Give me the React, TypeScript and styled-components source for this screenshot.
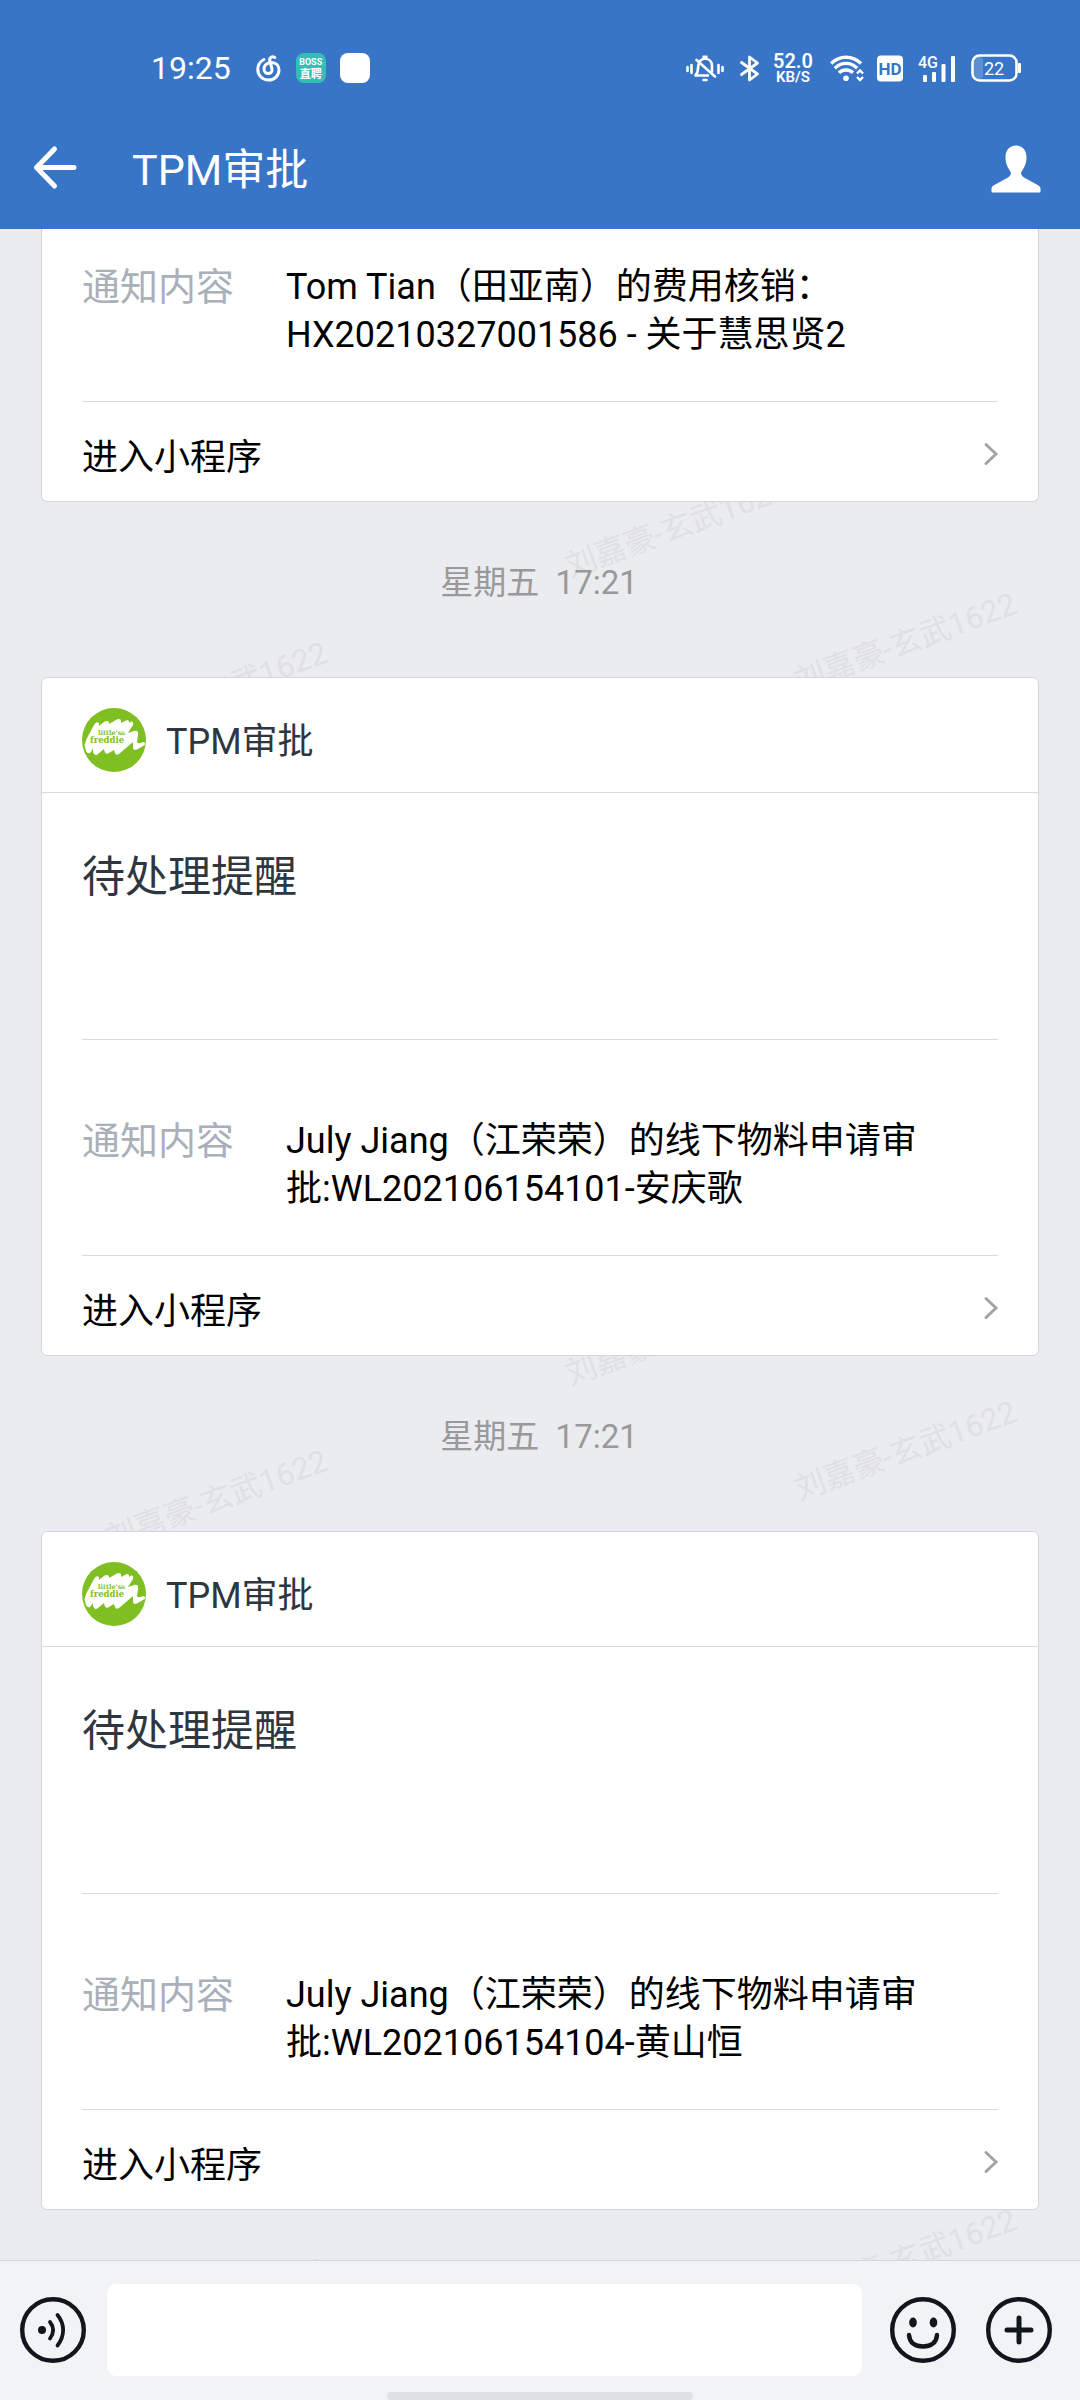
import React from 'react';
import styled, { createGlobalStyle } from 'styled-components';

const latin = `Roboto, "Noto Sans CJK SC", sans-serif`;
const cjk = `"Noto Sans CJK SC", sans-serif`;

const GlobalStyle = createGlobalStyle`
  * { box-sizing: border-box; }
  body { margin: 0; background: #ebecf0; font-family: ${latin}; color: #000; }
  button { border: 0; padding: 0; background: none; color: inherit; font: inherit; cursor: pointer; }
  svg { display: block; flex: none; overflow: visible; }
`;

const Page = styled.div`
  min-height: 100vh;
  display: flex;
  flex-direction: column;
`;

const Header = styled.header`
  background: #3875c6;
  color: #fff;
`;

const StatusBar = styled.div`
  height: 108px;
  padding: 28px 59px 0 151px;
  display: flex;
  align-items: center;
  justify-content: space-between;
`;

const StatusGroup = styled.div`
  display: flex;
  align-items: center;
  gap: 15px;
`;

const Clock = styled.time`
  font-size: 32px;
  line-height: 40px;
  margin-right: 10px;
`;

const BossBadge = styled.div`
  width: 30px;
  height: 30px;
  border-radius: 8px;
  background: #34bfb6;
  display: flex;
  flex-direction: column;
  align-items: center;
  justify-content: center;
  font-size: 9px;
  line-height: 12px;
  font-weight: 700;
`;

const BossName = styled.span`
  font-family: ${cjk};
  font-size: 11px;
  line-height: 16px;
  margin-top: -3px;
`;

const BlankBadge = styled.div`
  width: 30px;
  height: 30px;
  border-radius: 8px;
  margin-left: -1px;
  background: #fff;
`;

const Speed = styled.div`
  width: 40px;
  display: flex;
  flex-direction: column;
  align-items: center;
  font-weight: 600;
  font-size: 20px;
  line-height: 24px;
`;

const SpeedUnit = styled.span`
  font-size: 15px;
  line-height: 20px;
  margin-top: -6px;
`;

const TitleBar = styled.div`
  height: 121px;
  padding: 0 39px 0 32px;
  display: flex;
  align-items: center;
`;

const Title = styled.h1`
  flex: 1;
  margin: 0 0 0 54px;
  padding-top: 3px;
  font-size: 43px;
  line-height: 60px;
  font-weight: 400;
`;

const Chat = styled.main`
  position: relative;
  flex: 1;
  padding: 0 41px;
  overflow: hidden;
`;

const WatermarkLayer = styled.div`
  position: absolute;
  inset: 0;
  overflow: hidden;
  pointer-events: none;
`;

const WatermarkTile = styled.div`
  position: relative;
  height: 808px;
`;

const Watermark = styled.span<{ $x: number; $y: number }>`
  position: absolute;
  left: ${(p) => p.$x}px;
  top: ${(p) => p.$y}px;
  font-size: 31px;
  line-height: 40px;
  white-space: nowrap;
  color: #dfe0e3;
  transform: rotate(-20deg);
  transform-origin: 0 50%;
`;

const Messages = styled.div`
  position: relative;
`;

const Timestamp = styled.time`
  display: block;
  padding: 53px 2px 66px 0;
  text-align: center;
  font-size: 33px;
  line-height: 56px;
  white-space: pre;
  color: #999;
`;

const Card = styled.article<{ $continued?: boolean }>`
  background: #fff;
  border: 1px solid #d5d6d8;
  border-radius: ${(p) => (p.$continued ? '0 0 6px 6px' : '6px')};
  border-top-width: ${(p) => (p.$continued ? 0 : 1)}px;
`;

const CardHeader = styled.header`
  display: flex;
  align-items: center;
  gap: 20px;
  padding: 30px 40px 20px;
  border-bottom: 1px solid #d8d9db;
  color: #2e3640;
`;

const SenderName = styled.span`
  padding-top: 4px;
  font-size: 36px;
  line-height: 48px;
`;

const CardBody = styled.div`
  padding: 0 40px;
`;

const CardTitle = styled.h2`
  margin: 0;
  padding: 50px 0 136px;
  border-bottom: 1px solid #d8d9db;
  font-family: ${cjk};
  font-size: 43px;
  line-height: 60px;
  font-weight: 400;
  color: #2e3640;
`;

const Fields = styled.dl<{ $continued?: boolean }>`
  margin: 0;
  padding: ${(p) => (p.$continued ? 34 : 77)}px 48px 42px 0;
  display: grid;
  grid-template-columns: 204px 1fr;
  align-items: start;
  border-bottom: 1px solid #d8d9db;
  line-height: 48px;
`;

const FieldName = styled.dt`
  font-size: 38px;
  color: #a9b0ba;
`;

const FieldValue = styled.dd`
  margin: 0;
  font-size: 36px;
`;

const CardLink = styled.a`
  display: flex;
  align-items: center;
  justify-content: space-between;
  padding: 28px 0 23px;
  font-family: ${cjk};
  font-size: 36px;
  line-height: 48px;
  color: #000;
  text-decoration: none;
`;

const Composer = styled.form`
  display: flex;
  align-items: center;
  padding: 23px 28px 16px 20px;
  background: #f2f3f5;
  border-top: 1px solid #d5d6d8;
`;

const MessageInput = styled.input`
  flex: 1;
  min-width: 0;
  height: 92px;
  margin: 0 28px 0 21px;
  padding: 0 24px;
  border: 0;
  border-radius: 9px;
  background: #fff;
  font: 400 36px/48px ${latin};
  outline: none;
`;

const PlusButton = styled.button`
  margin-left: 30px;
`;

const HomeArea = styled.div`
  display: flex;
  justify-content: center;
  background: #f2f3f5;
`;

const HomeIndicator = styled.div`
  width: 306px;
  height: 8px;
  border-radius: 4px;
  background: #dfe0e2;
`;

const MusicIcon = () => (
  <svg width="25" height="27" viewBox="0 0 25 27" fill="none" stroke="#fff" strokeWidth="3" strokeLinecap="round">
    <path d="M8 4.500C4 6.500 1.800 10 1.800 14.500C1.800 20.500 6.500 25 12.500 25S23 20.500 23 15C23 10.500 20 7.500 15.500 7.500C11 7.500 8 10.500 8 13.800C8 16.500 9.800 18.500 12.200 18.500C14.800 18.500 16.500 16.500 16 14L13.800 5.500C13.200 2.500 16 .8 18.800 2.500" />
  </svg>
);

const MutedBellIcon = () => (
  <svg width="38" height="27" viewBox="-1 0 38 27" fill="none" stroke="#fff" strokeWidth="2.600" strokeLinecap="round" strokeLinejoin="round">
    <path d="M1.500 12V16M5.500 10V18M32.500 10V18M36.500 12V16" />
    <path d="M14.500 5.500C16 4.300 17.500 3.800 19 3.800C23.500 3.800 26 7 26 11V16.500M12.500 9.500L11.500 17L9.500 20.500H22M10.500 5L29 21.500" />
    <path d="M17.500 1.800H20.500M17.500 25H20.500" />
  </svg>
);

const BluetoothIcon = () => (
  <svg width="20" height="27" viewBox="-2 0 20 27" fill="none" stroke="#fff" strokeWidth="2.800" strokeLinejoin="round" strokeLinecap="round">
    <path d="M1.500 7.500L17.500 19L9.500 25V2L17.500 8L1.500 19.500" />
  </svg>
);

const WifiIcon = () => (
  <svg width="34" height="27" viewBox="-2 0 34 27" fill="none" stroke="#fff" strokeWidth="3.400">
    <path d="M1.200 8.500C9.500 .2 22.500 .2 31 8.500M4.800 13.200C11.500 6.800 20.500 6.800 27.200 13.200M9 17.800C13 14 19 14 23 17.800" />
    <circle cx="16" cy="23.200" r="2.800" fill="#fff" stroke="none" />
    <path d="M27 18.500L30 15.500L33 18.500M27 22L30 25L33 22" strokeWidth="2.400" />
  </svg>
);

const HdIcon = () => (
  <svg width="26" height="27" viewBox="0 0 26 27">
    <rect width="26" height="26" rx="4" y=".5" fill="#fff" />
    <text x="13" y="19.500" textAnchor="middle" fontFamily="Roboto, sans-serif" fontWeight="700" fontSize="17" fill="#3875c6">HD</text>
  </svg>
);

const SignalIcon = () => (
  <svg width="38" height="27" viewBox="0 0 38 27" fill="#fff">
    <text x="0" y="13" fontFamily="Roboto, sans-serif" fontSize="16" fontWeight="500">4G</text>
    <rect x="5" y="20" width="4" height="7" rx="1" />
    <rect x="14" y="17" width="4" height="10" rx="1" />
    <rect x="23.500" y="9" width="4" height="18" rx="1" />
    <rect x="33" y="1" width="4" height="26" rx="1" />
  </svg>
);

const BatteryIcon = () => (
  <svg width="50" height="28" viewBox="0 0 50 28">
    <rect x="3" y="3" width="9" height="22" rx="3" fill="#5b8fd2" />
    <rect x="1.500" y="1.500" width="44" height="25" rx="7" fill="none" stroke="#fff" strokeWidth="2.600" />
    <rect x="47" y="9" width="3" height="10" rx="1" fill="#fff" />
    <text x="23" y="20.500" textAnchor="middle" fontFamily="Roboto, sans-serif" fontSize="18" fill="#fff">22</text>
  </svg>
);

const BackIcon = () => (
  <svg width="46" height="46" viewBox="0 1 46 46" fill="none" stroke="#fff" strokeWidth="5" strokeLinecap="round" strokeLinejoin="round">
    <path d="M22.500 4L4.500 22.500L22.500 41M5 22.500H42" />
  </svg>
);

const PersonIcon = () => (
  <svg width="50" height="48" viewBox="0 0 50 48" fill="#fff">
    <path d="M25 .5C18.500 .5 14.500 5.500 14.500 12C14.500 19 17 23 19.500 26.500C20.500 29 19.500 31 17 32.500L2.500 40.500C1 41.500 .5 42.500 .5 44V46C.5 47 1 47.500 2 47.500H48C49 47.500 49.500 47 49.500 46V44C49.500 42.500 49 41.500 47.500 40.500L33 32.500C30.500 31 29.500 29 30.500 26.500C33 23 35.500 19 35.500 12C35.500 5.500 31.500 .5 25 .5Z" />
  </svg>
);

const BrandLogo = () => (
  <svg width="64" height="64" viewBox="0 0 64 64">
    <circle cx="32" cy="32" r="32" fill="#7fbf22" />
    <path
      d="M4 43L2.500 37L4.500 31L12 17Q14 13 17 15V18L22 14Q25 12 27 14V16L34 12Q37 10 39 12V15L44 12.500Q47 11 47.500 15L49 13.500Q52 13 51 17L46 25L52 23Q57 22 56 27L55 34Q56 36 59 35Q62 33 63 35.500Q63.500 37 61 38L55 41.500Q51 43 51 39V34L44 40L37 46Q34 48 33 45L32 42L26 45.500Q23 47 22 41L16 46Q13 49 11 44L11 41L8 45Q5 46 4 43Z"
      fill="#fff"
    />
    <g fill="#7fbf22" fontFamily="DejaVu Serif, serif" fontWeight="700">
      <text x="16" y="27" fontSize="6.500">little’s</text>
      <text x="39" y="27" fontSize="5">&amp;</text>
      <text x="8" y="35" fontSize="8.500">freddie</text>
    </g>
  </svg>
);

const ChevronIcon = () => (
  <svg width="14" height="24" viewBox="0 0 14 24" fill="none" stroke="#a3a3a3" strokeWidth="3" strokeLinecap="round">
    <path d="M2 2.500L12 12L2 21.500" />
  </svg>
);

const RoundIcon = ({ children }: { children: React.ReactNode }) => (
  <svg width="66" height="66" viewBox="0 0 66 66" fill="none" stroke="#10161c" strokeWidth="4.400" strokeLinecap="round">
    <circle cx="33" cy="33" r="30.800" />
    {children}
  </svg>
);

const VoiceIcon = () => (
  <RoundIcon>
    <circle cx="22" cy="33" r="4" fill="#10161c" stroke="none" />
    <path d="M30 25C34 30 34 36 30 41.500M37.500 18C45 27 45 39 37.500 48.500" strokeWidth="3.800" />
  </RoundIcon>
);

const SmileIcon = () => (
  <RoundIcon>
    <ellipse cx="23" cy="25.500" rx="3.800" ry="5" fill="#10161c" stroke="none" />
    <ellipse cx="43.500" cy="25.500" rx="3.800" ry="5" fill="#10161c" stroke="none" />
    <path d="M19 38C19.500 46 25.500 49.500 33 49.500S46.500 46 47 38" />
  </RoundIcon>
);

const PlusIcon = () => (
  <RoundIcon>
    <path d="M33 21V45M21 33H45" strokeWidth="5" />
  </RoundIcon>
);

interface Notice {
  time?: string;
  content: string;
}

const notices: Notice[] = [
  { content: 'Tom Tian（田亚南）的费用核销：HX20210327001586 - 关于慧思贤2' },
  { time: '星期五  17:21', content: 'July Jiang（江荣荣）的线下物料申请审批:WL202106154101-安庆歌' },
  { time: '星期五  17:21', content: 'July Jiang（江荣荣）的线下物料申请审批:WL202106154104-黄山恒' },
];

const marks = [
  { x: 107, y: 483 },
  { x: 567, y: 319 },
  { x: 796, y: 434 },
];

const NoticeCard = ({ notice }: { notice: Notice }) => {
  const continued = !notice.time;
  return (
    <>
      {notice.time && <Timestamp>{notice.time}</Timestamp>}
      <Card $continued={continued}>
        {!continued && (
          <CardHeader>
            <BrandLogo />
            <SenderName>TPM审批</SenderName>
          </CardHeader>
        )}
        <CardBody>
          {!continued && <CardTitle>待处理提醒</CardTitle>}
          <Fields $continued={continued}>
            <FieldName>通知内容</FieldName>
            <FieldValue>{notice.content}</FieldValue>
          </Fields>
          <CardLink href="#">
            进入小程序
            <ChevronIcon />
          </CardLink>
        </CardBody>
      </Card>
    </>
  );
};

export default function App() {
  return (
    <Page>
      <GlobalStyle />
      <Header>
        <StatusBar>
          <StatusGroup>
            <Clock>19:25</Clock>
            <MusicIcon />
            <BossBadge>
              BOSS
              <BossName>直聘</BossName>
            </BossBadge>
            <BlankBadge />
          </StatusGroup>
          <StatusGroup>
            <MutedBellIcon />
            <BluetoothIcon />
            <Speed>
              52.0
              <SpeedUnit>KB/S</SpeedUnit>
            </Speed>
            <WifiIcon />
            <HdIcon />
            <SignalIcon />
            <BatteryIcon />
          </StatusGroup>
        </StatusBar>
        <TitleBar>
          <button type="button" aria-label="返回">
            <BackIcon />
          </button>
          <Title>TPM审批</Title>
          <button type="button" aria-label="联系人">
            <PersonIcon />
          </button>
        </TitleBar>
      </Header>

      <Chat>
        <WatermarkLayer aria-hidden="true">
          {[0, 1, 2].map((row) => (
            <WatermarkTile key={row}>
              {marks.map((m) => (
                <Watermark key={m.x} $x={m.x} $y={m.y}>
                  刘嘉豪-玄武1622
                </Watermark>
              ))}
            </WatermarkTile>
          ))}
        </WatermarkLayer>
        <Messages>
          {notices.map((n, i) => (
            <NoticeCard key={i} notice={n} />
          ))}
        </Messages>
      </Chat>

      <Composer onSubmit={(e) => e.preventDefault()}>
        <button type="button" aria-label="语音">
          <VoiceIcon />
        </button>
        <MessageInput type="text" aria-label="消息" />
        <button type="button" aria-label="表情">
          <SmileIcon />
        </button>
        <PlusButton type="button" aria-label="更多">
          <PlusIcon />
        </PlusButton>
      </Composer>
      <HomeArea>
        <HomeIndicator />
      </HomeArea>
    </Page>
  );
}
